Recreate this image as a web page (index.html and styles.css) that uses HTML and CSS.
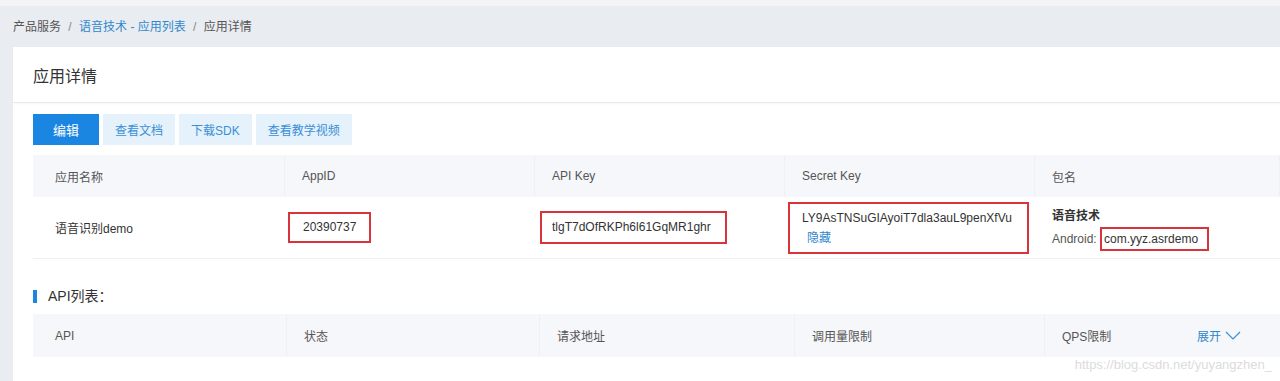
FILE: index.html
```html
<!doctype html>
<html lang="zh">

<head>
  <meta charset="utf-8">
  <title>应用详情</title>
  <link rel="stylesheet" href="styles.css">
</head>

<body>
  <div class="topbar"></div>
  <div class="page">
    <div class="crumbs">
      <span>产品服务</span>
      <span class="sep">/</span>
      <a href="#">语音技术 - 应用列表</a>
      <span class="sep">/</span>
      <span>应用详情</span>
    </div>

    <div class="card">
      <div class="card-head">应用详情</div>
      <div class="card-body">
        <div class="actions">
          <button class="btn btn-primary" type="button">编辑</button>
          <button class="btn" type="button">查看文档</button>
          <button class="btn" type="button">下载SDK</button>
          <button class="btn" type="button">查看教学视频</button>
        </div>

        <div class="grid app-grid">
          <div class="th">应用名称</div>
          <div class="th">AppID</div>
          <div class="th">API Key</div>
          <div class="th">Secret Key</div>
          <div class="th">包名</div>

          <div class="td">语音识别demo</div>
          <div class="td"><span class="mark mark-id">20390737</span></div>
          <div class="td"><span class="mark mark-key">tlgT7dOfRKPh6l61GqMR1ghr</span></div>
          <div class="td">
            <span class="mark mark-secret">
              LY9AsTNSuGIAyoiT7dla3auL9penXfVu<br>
              <a class="hide-link" href="#">隐藏</a>
            </span>
          </div>
          <div class="td">
            <div class="pkg">
              <b>语音技术</b>
              <span>Android: <span class="mark mark-pkg">com.yyz.asrdemo</span></span>
            </div>
          </div>
        </div>

        <h3 class="section-title">API列表：</h3>

        <div class="grid api-grid">
          <div class="th">API</div>
          <div class="th">状态</div>
          <div class="th">请求地址</div>
          <div class="th">调用量限制</div>
          <div class="th">QPS限制</div>
          <div class="th th-more">
            <a href="#">展开</a>
            <svg width="16" height="9" viewBox="0 0 16 9"><polyline points="1,1 8,8 15,1" fill="none" stroke="#3a8fd6" stroke-width="1.2"/></svg>
          </div>
        </div>
      </div>
    </div>
  </div>
  <div class="watermark">https://blog.csdn.net/yuyangzhen_</div>
</body>

</html>
```

FILE: styles.css
```css
body {
  margin: 0;
  font-family: "Liberation Sans", "Noto Sans CJK SC", sans-serif;
  font-size: 12px;
  color: #333;
  background-color: #e9ecf1;
  overflow: hidden;
  height: 381px;
  position: relative;
}

a {
  color: #2f88cc;
  text-decoration: none;
}

.topbar {
  height: 6px;
  background-color: #f4f4f5;
}

.page {
  padding-left: 13px;
}

.crumbs {
  height: 41px;
  line-height: 43px;
  color: #555;
}

.crumbs .sep {
  color: #888;
  margin: 0 4px;
}

.card {
  background-color: #fff;
  height: 340px;
}

.card-head {
  height: 52px;
  line-height: 54px;
  padding: 3px 0 0 20px;
  font-size: 16px;
  color: #333;
  border-bottom: 1px solid #e8e9eb;
  box-shadow: 0 1px 2px rgba(0, 0, 0, 0.03);
}

.card-body {
  padding: 11px 0 0 20px;
}

.actions {
  display: flex;
  gap: 4px;
}

.btn {
  height: 31px;
  padding: 0 12px;
  border: none;
  border-radius: 0;
  background-color: #e5f1fb;
  color: #3a8fd6;
  font-family: inherit;
  font-size: 12px;
}

.btn-primary {
  width: 66px;
  background-color: #1a86e2;
  color: #fff;
  font-size: 13px;
}

.grid {
  display: grid;
}

.app-grid {
  margin-top: 10px;
  grid-template-columns: 252px 250px 250px 250px 1fr;
}

.api-grid {
  grid-template-columns: 254px 253px 255px 250px 150px 1fr;
}

.th {
  height: 42px;
  display: flex;
  align-items: center;
  padding-left: 17px;
  background-color: #f5f7fa;
  color: #555;
  border-right: 1px solid #eef0f4;
}

.th:first-child {
  padding-left: 22px;
}

.api-grid .th {
  height: 43px;
}

.td {
  height: 61px;
  display: flex;
  align-items: center;
  padding-left: 17px;
  border-bottom: 1px solid #eeeff1;
}

.td:nth-child(6) {
  padding-left: 22px;
}

.mark {
  display: inline-block;
  border: 2px solid #d7353b;
}

.mark-id {
  margin-left: -14px;
  padding: 6px 13px;
  line-height: 15px;
}

.mark-key {
  margin-left: -12px;
  padding: 7px 14px 7px 10px;
  line-height: 15px;
}

.mark-secret {
  margin-left: -14px;
  padding: 4px 15px 4px 12px;
  line-height: 20px;
}

.hide-link {
  margin-left: 5px;
}

.pkg {
  display: flex;
  flex-direction: column;
  line-height: 21px;
  margin-top: 1px;
  color: #555;
}

.pkg b {
  color: #333;
}

.mark-pkg {
  padding: 1px 9px 1px 2px;
  line-height: 18px;
  color: #333;
}

.section-title {
  margin: 31px 0 11px;
  padding-left: 11px;
  border-left: 4px solid #1a86e2;
  height: 13px;
  line-height: 13px;
  font-size: 14px;
  font-weight: normal;
  color: #333;
}

.api-grid .th:nth-child(5) {
  border-right: none;
}

.th-more {
  padding-left: 2px;
  gap: 4px;
  border-right: none;
}

.watermark {
  position: absolute;
  right: 8px;
  bottom: 9px;
  font-size: 13px;
  color: #dcdcdc;
}
```
